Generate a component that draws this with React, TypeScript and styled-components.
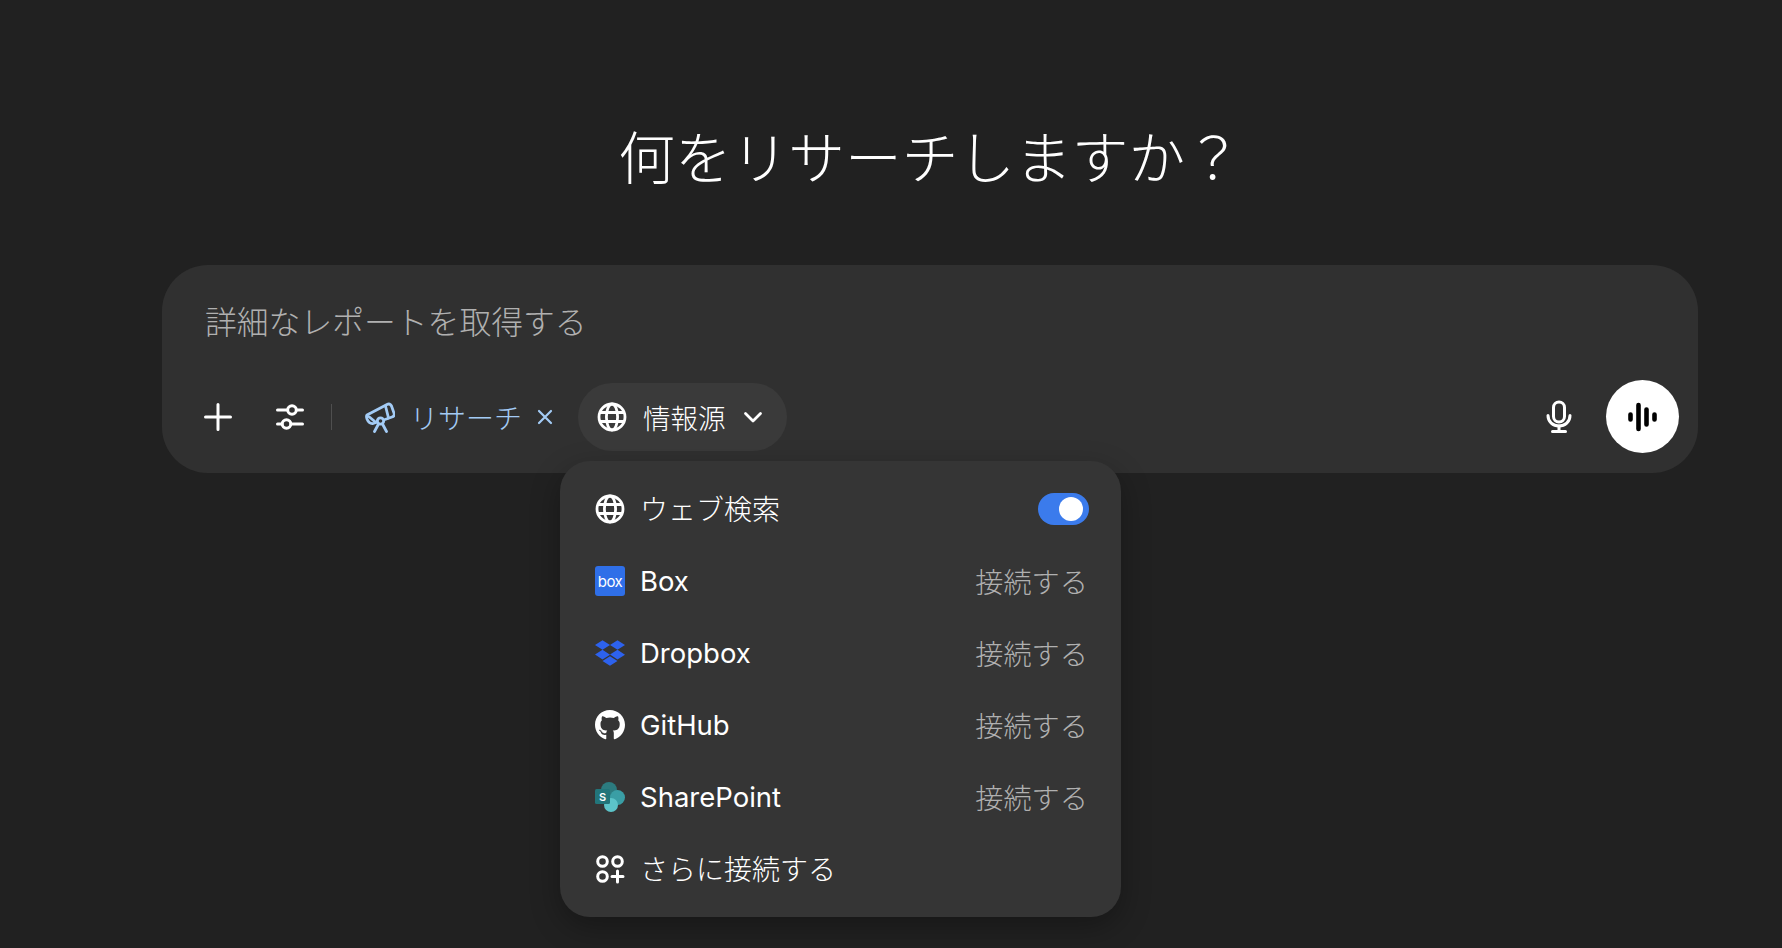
import React from 'react';
import styled, { createGlobalStyle } from 'styled-components';
import { FaGithub, FaDropbox } from 'react-icons/fa';

const GlobalStyle = createGlobalStyle`
  html, body {
    margin: 0;
    padding: 0;
    height: 100%;
    background: #212121;
    overflow: hidden;
  }
  body {
    font-family: Inter, "Noto Sans CJK JP", sans-serif;
    color: #fff;
  }
`;

const Page = styled.main`
  box-sizing: border-box;
  height: 948px;
  padding: 0 84px 0 162px;
  display: flex;
  flex-direction: column;
`;

const Heading = styled.h1`
  margin: 118px 0 65px;
  font-size: 56.7px;
  line-height: 82px;
  font-weight: 300;
  text-align: center;
  color: #fff;
`;

const Composer = styled.section`
  position: relative;
  box-sizing: border-box;
  height: 208px;
  border-radius: 46px;
  background: #303030;
  padding: 30px 19px 20px 20px;
  display: flex;
  flex-direction: column;
  justify-content: space-between;
`;

const Placeholder = styled.div`
  padding-left: 23px;
  font-size: 31.8px;
  font-weight: 300;
  line-height: 56px;
  color: #b0b0b0;
`;

const Toolbar = styled.div`
  display: flex;
  align-items: center;
  height: 73px;
`;

const IconButton = styled.button<{ $w: number }>`
  width: ${(p) => p.$w}px;
  height: 73px;
  padding: 0;
  border: 0;
  background: none;
  color: #fff;
  display: flex;
  align-items: center;
  justify-content: center;
`;

const Separator = styled.span`
  width: 1px;
  height: 26px;
  background: #4f4f4f;
  margin: 0 33px 0 5px;
`;

const ResearchChip = styled.div`
  display: flex;
  align-items: center;
  color: #a3cbf5;
  font-size: 28px;
  font-weight: 300;
  margin-right: 24px;
`;

const ChipLabel = styled.span`
  margin: 0 14px 0 15px;
`;

const SourcesPill = styled.button`
  box-sizing: border-box;
  width: 209px;
  height: 68px;
  border: 0;
  border-radius: 34px;
  background: #3a3a3a;
  color: #fff;
  font: inherit;
  font-size: 27.5px;
  font-weight: 300;
  padding: 0 0 0 19px;
  display: flex;
  align-items: center;
`;

const PillLabel = styled.span`
  margin: 0 17px 0 16px;
`;

const Spacer = styled.div`
  flex: 1;
`;

const SendButton = styled.button`
  width: 73px;
  height: 73px;
  margin-left: 17px;
  padding: 0;
  border: 0;
  border-radius: 50%;
  background: #fff;
  color: #000;
  display: flex;
  align-items: center;
  justify-content: center;
`;

const Menu = styled.div`
  position: absolute;
  left: 398px;
  top: 196px;
  box-sizing: border-box;
  width: 561px;
  height: 456px;
  padding: 12px 0;
  border-radius: 30px;
  background: #353535;
  box-shadow: 0 10px 30px rgba(0, 0, 0, 0.3);
`;

const Row = styled.div`
  height: 72px;
  padding: 0 33px 0 35px;
  display: flex;
  align-items: center;
  font-size: 27.5px;
  color: #fff;
`;

const RowIcon = styled.span<{ $color?: string }>`
  width: 30px;
  height: 30px;
  margin-right: 15px;
  flex: none;
  display: flex;
  align-items: center;
  justify-content: center;
  color: ${(p) => p.$color || '#fff'};
`;

const RowLabel = styled.span<{ $cjk?: boolean }>`
  flex: 1;
  font-size: ${(p) => (p.$cjk ? '28px' : '27.5px')};
  font-weight: ${(p) => (p.$cjk ? 300 : 400)};
  padding-bottom: ${(p) => (p.$cjk ? '3px' : '0')};
`;

const ConnectLabel = styled.span`
  color: #b0b0b0;
  font-size: 28.2px;
  font-weight: 300;
  padding-bottom: 2px;
`;

const BoxLogo = styled.span`
  width: 30px;
  height: 30px;
  border-radius: 3px;
  background: #2f6fe8;
  color: #fff;
  font-size: 15px;
  font-weight: 400;
  letter-spacing: -0.5px;
  display: flex;
  align-items: center;
  justify-content: center;
`;

const Toggle = styled.span`
  box-sizing: border-box;
  width: 51px;
  height: 32px;
  margin-right: -1px;
  border-radius: 16px;
  background: #3b7bec;
  padding: 4px 4px 4px 21px;
  display: flex;
`;

const ToggleKnob = styled.span`
  width: 24px;
  height: 24px;
  border-radius: 50%;
  background: #fff;
`;

const GlobeIcon = () => (
  <svg width="30" height="30" viewBox="0 0 30 30" fill="none" stroke="currentColor" strokeWidth="2.8">
    <circle cx="15" cy="15" r="13" />
    <ellipse cx="15" cy="15" rx="5.6" ry="13" />
    <path d="M3 10.500h24M3 19.500h24" />
  </svg>
);

const PlusIcon = () => (
  <svg width="30" height="30" viewBox="0 0 30 30" fill="none" stroke="currentColor" strokeWidth="3" strokeLinecap="round">
    <path d="M15 2.500v25M2.500 15h25" />
  </svg>
);

const SlidersIcon = () => (
  <svg width="30" height="30" viewBox="0 0 30 30" fill="none" stroke="currentColor" strokeWidth="3" strokeLinecap="round">
    <circle cx="17" cy="8" r="4.300" />
    <circle cx="11.500" cy="22" r="4.300" />
    <path d="M2.500 8h10M21.500 8h6M2.500 22h4.500M16 22h11.500" />
  </svg>
);

const TelescopeIcon = () => (
  <svg width="30" height="32" viewBox="10 10 30 32" fill="none" stroke="currentColor" strokeWidth="2.800" strokeLinecap="round" strokeLinejoin="round">
    <path d="M12 24 32 13.500Q35 12 36.500 15L39 22Q40 25 37 26L30 28.500M21 31.500 18 32.500Q14 33 12 28Q11 25 12 24Z" />
    <path d="M30.500 15 33.500 27" />
    <circle cx="25.500" cy="30" r="3.200" />
    <path d="M23.500 33 19.500 40.500M27.500 33l4 7.500" />
  </svg>
);

const CloseIcon = () => (
  <svg width="18" height="18" viewBox="0 0 18 18" fill="none" stroke="currentColor" strokeWidth="2.200" strokeLinecap="round">
    <path d="M3 3l12 12M15 3 3 15" />
  </svg>
);

const ChevronIcon = () => (
  <svg width="20" height="14" viewBox="0 0 20 14" fill="none" stroke="currentColor" strokeWidth="2.800" strokeLinecap="round" strokeLinejoin="round">
    <path d="M2.500 3.500 10 11l7.500 -7.500" />
  </svg>
);

const MicIcon = () => (
  <svg width="30" height="34" viewBox="0 0 30 34" fill="none" stroke="currentColor" strokeWidth="3" strokeLinecap="round" strokeLinejoin="round">
    <rect x="9.500" y="2" width="11" height="20" rx="5.500" />
    <path d="M4 15.500c0 6.500 5 10.500 11 10.500s11 -4 11 -10.500" />
    <path d="M15 26v5.500M8.500 31.500h13" />
  </svg>
);

const WaveIcon = () => (
  <svg width="30" height="30" viewBox="0 0 30 30" fill="none" stroke="currentColor" strokeWidth="4.600" strokeLinecap="round">
    <path d="M2.500 12.500v5M10.500 3v24M18.500 7.500v15M26.500 12.500v5" />
  </svg>
);

const SharePointIcon = () => (
  <svg width="30" height="30" viewBox="0 0 30 30">
    <circle cx="14" cy="8" r="8" fill="#2c7b7f" />
    <circle cx="22.500" cy="15.500" r="7.500" fill="#3a9ea5" />
    <circle cx="16" cy="23" r="7" fill="#5cc4c9" />
    <rect x="0" y="7" width="15" height="15" rx="1.500" fill="#22757a" />
    <text x="7.500" y="18.500" fontSize="11" fontWeight="600" fill="#fff" textAnchor="middle" fontFamily="Inter, sans-serif">S</text>
  </svg>
);

const AppsIcon = () => (
  <svg width="30" height="30" viewBox="0 0 30 30" fill="none" stroke="currentColor" strokeWidth="3" strokeLinecap="round">
    <circle cx="7.500" cy="7.500" r="4.800" />
    <circle cx="22.500" cy="7.500" r="4.800" />
    <circle cx="7.500" cy="22.500" r="4.800" />
    <path d="M22.500 17v11M17 22.500h11" />
  </svg>
);

const connectors = [
  { name: 'Box', icon: <BoxLogo>box</BoxLogo> },
  { name: 'Dropbox', icon: <FaDropbox size={34} />, color: '#2d62ee' },
  { name: 'GitHub', icon: <FaGithub size={32} /> },
  { name: 'SharePoint', icon: <SharePointIcon /> },
];

export default function App() {
  return (
    <>
      <GlobalStyle />
      <Page>
        <Heading>何をリサーチしますか？</Heading>
        <Composer>
          <Placeholder>詳細なレポートを取得する</Placeholder>
          <Toolbar>
            <IconButton $w={72}>
              <PlusIcon />
            </IconButton>
            <IconButton $w={72}>
              <SlidersIcon />
            </IconButton>
            <Separator />
            <ResearchChip>
              <TelescopeIcon />
              <ChipLabel>リサーチ</ChipLabel>
              <CloseIcon />
            </ResearchChip>
            <SourcesPill>
              <GlobeIcon />
              <PillLabel>情報源</PillLabel>
              <ChevronIcon />
            </SourcesPill>
            <Spacer />
            <IconButton $w={60}>
              <MicIcon />
            </IconButton>
            <SendButton>
              <WaveIcon />
            </SendButton>
          </Toolbar>
          <Menu>
            <Row>
              <RowIcon>
                <GlobeIcon />
              </RowIcon>
              <RowLabel $cjk>ウェブ検索</RowLabel>
              <Toggle>
                <ToggleKnob />
              </Toggle>
            </Row>
            {connectors.map((c) => (
              <Row key={c.name}>
                <RowIcon $color={c.color}>{c.icon}</RowIcon>
                <RowLabel>{c.name}</RowLabel>
                <ConnectLabel>接続する</ConnectLabel>
              </Row>
            ))}
            <Row>
              <RowIcon>
                <AppsIcon />
              </RowIcon>
              <RowLabel $cjk>さらに接続する</RowLabel>
            </Row>
          </Menu>
        </Composer>
      </Page>
    </>
  );
}
